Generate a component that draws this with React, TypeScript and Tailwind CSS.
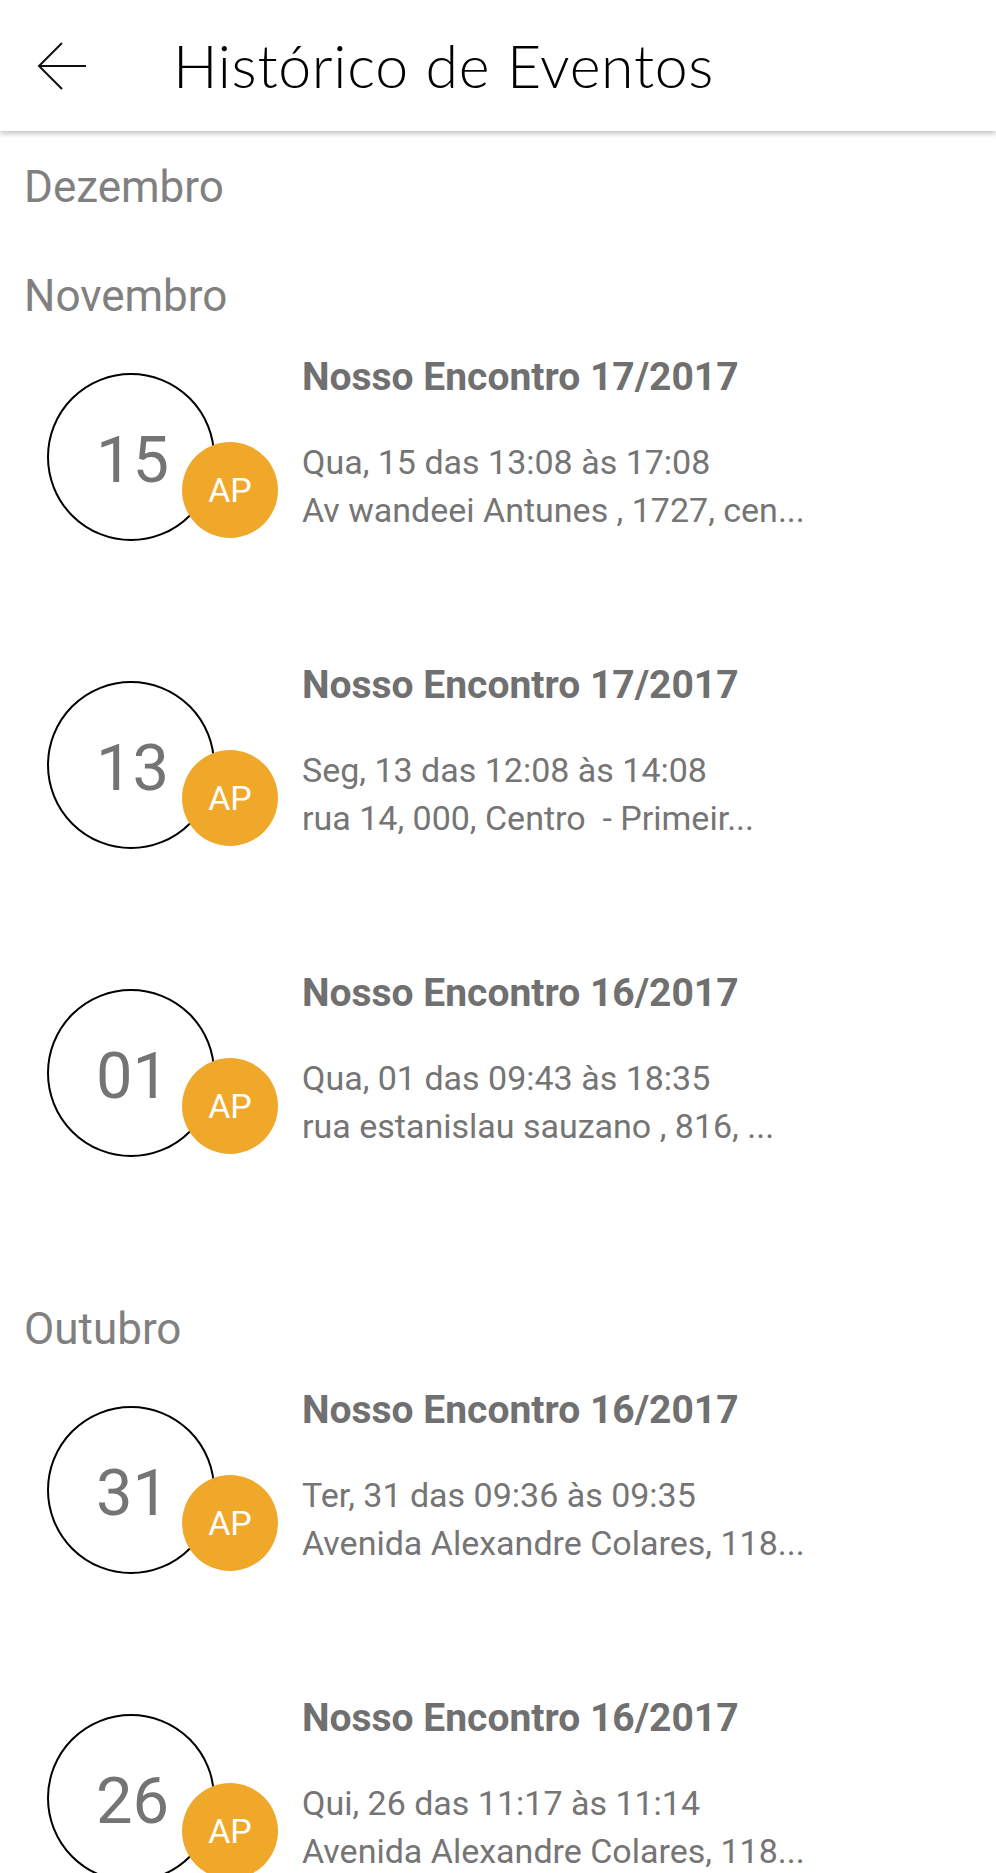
import React from 'react';

type Evento = {
  day: string;
  title: string;
  when: string;
  where: string;
};

type Mes = {
  name: string;
  events: Evento[];
};

const meses: Mes[] = [
  { name: 'Dezembro', events: [] },
  {
    name: 'Novembro',
    events: [
      { day: '15', title: 'Nosso Encontro 17/2017', when: 'Qua, 15 das 13:08 às 17:08', where: 'Av wandeei Antunes , 1727, cen...' },
      { day: '13', title: 'Nosso Encontro 17/2017', when: 'Seg, 13 das 12:08 às 14:08', where: 'rua 14, 000, Centro  - Primeir...' },
      { day: '01', title: 'Nosso Encontro 16/2017', when: 'Qua, 01 das 09:43 às 18:35', where: 'rua estanislau sauzano , 816, ...' },
    ],
  },
  {
    name: 'Outubro',
    events: [
      { day: '31', title: 'Nosso Encontro 16/2017', when: 'Ter, 31 das 09:36 às 09:35', where: 'Avenida Alexandre Colares, 118...' },
      { day: '26', title: 'Nosso Encontro 16/2017', when: 'Qui, 26 das 11:17 às 11:14', where: 'Avenida Alexandre Colares, 118...' },
    ],
  },
];

const EventRow = ({ ev }: { ev: Evento }) => (
  <div className="flex items-start h-[308px]">
    <div className="relative ml-[47px] mt-[24px] w-[168px] h-[168px] shrink-0">
      <div className="w-full h-full rounded-full border-2 border-black flex items-center justify-center">
        <span className="text-[65px] leading-none text-[#747474] mt-[6px] ml-[3px]">{ev.day}</span>
      </div>
      <div className="absolute left-[135px] top-[69px] w-[96px] h-[96px] rounded-full bg-[#efa82a] flex items-center justify-center">
        <span className="text-[34px] leading-none text-white">AP</span>
      </div>
    </div>
    <div className="ml-[87px] flex flex-col">
      <div className="mt-[8px] h-[40px] leading-[40px] text-[39px] font-bold text-[#707070] whitespace-pre">
        {ev.title}
      </div>
      <div className="mt-[41px] h-[48px] leading-[48px] text-[34px] text-[#757575] whitespace-pre">
        {ev.when}
      </div>
      <div className="h-[48px] leading-[48px] text-[34px] text-[#757575] whitespace-pre">
        {ev.where}
      </div>
    </div>
  </div>
);

export default function App() {
  return (
    <div
      className="w-[996px] h-[1873px] overflow-hidden bg-white flex flex-col"
      style={{ fontFamily: 'Roboto, "Noto Sans", sans-serif' }}
    >
      <header className="relative z-10 h-[131px] shrink-0 bg-white flex items-center shadow-[0_3px_5px_rgba(0,0,0,0.22)]">
        <button className="ml-[36px] w-[52px] h-[52px] flex items-center justify-center">
          <svg width="50" height="48" viewBox="0 0 50 48" fill="none" stroke="#111" strokeWidth="2">
            <path d="M49 24H3" />
            <path d="M25 1L2 24l23 23" />
          </svg>
        </button>
        <h1
          className="ml-[85px] text-[59px] font-light leading-none text-black tracking-[0.7px]"
          style={{ fontFamily: 'Lato, "Open Sans", sans-serif' }}
        >
          Histórico de Eventos
        </h1>
      </header>

      <main className="flex flex-col">
        {meses.map((m) => (
          <section key={m.name} className="flex flex-col">
            <div className="h-[109px] pt-[31px] pl-[24px]">
              <span className="block h-[50px] leading-[50px] text-[44px] text-[#808080]">{m.name}</span>
            </div>
            {m.events.map((ev, i) => (
              <EventRow key={i} ev={ev} />
            ))}
          </section>
        ))}
      </main>
    </div>
  );
}
